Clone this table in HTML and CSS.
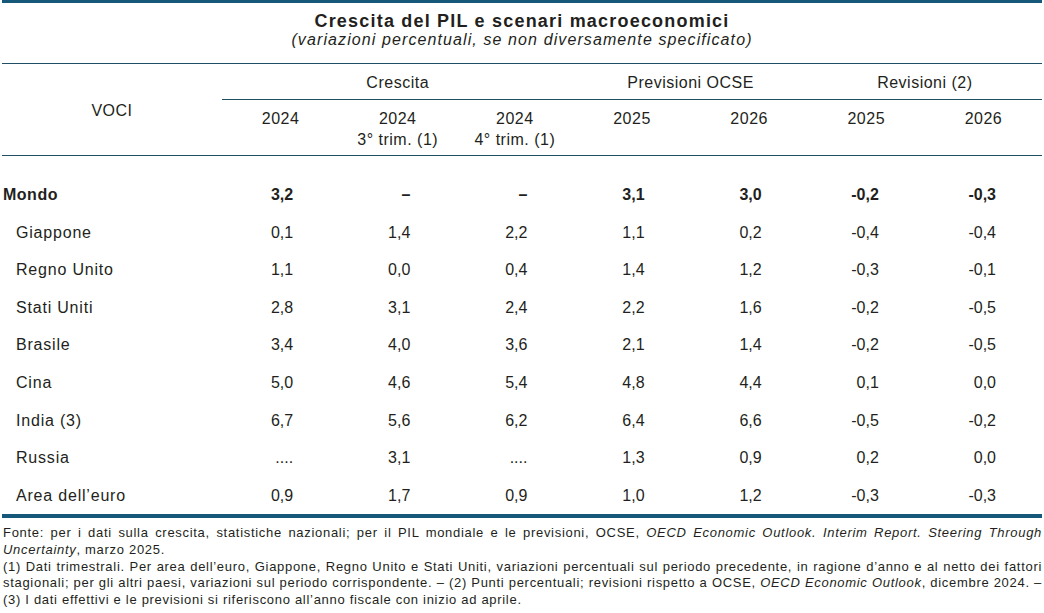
FILE: index.html
```html
<!DOCTYPE html>
<html lang="it">
<head>
<meta charset="utf-8">
<title>Crescita del PIL e scenari macroeconomici</title>
<link rel="stylesheet" href="styles.css">
</head>
<body>
<div class="page">
  <header class="head">
    <h1 class="title">Crescita del PIL e scenari macroeconomici</h1>
    <p class="subtitle">(variazioni percentuali, se non diversamente specificato)</p>
  </header>
  <table class="data">
    <colgroup>
      <col class="c-label">
      <col class="c-num"><col class="c-num"><col class="c-num"><col class="c-num"><col class="c-num"><col class="c-num"><col class="c-num">
    </colgroup>
    <thead>
      <tr>
        <th rowspan="2" class="voci">VOCI</th>
        <th colspan="3" class="grp">Crescita</th>
        <th colspan="2" class="grp">Previsioni OCSE</th>
        <th colspan="2" class="grp">Revisioni (2)</th>
      </tr>
      <tr>
        <th class="yr">2024</th>
        <th class="yr">2024<br>3° trim. (1)</th>
        <th class="yr">2024<br>4° trim. (1)</th>
        <th class="yr">2025</th>
        <th class="yr">2026</th>
        <th class="yr">2025</th>
        <th class="yr">2026</th>
      </tr>
    </thead>
    <tbody>
      <tr class="first total">
        <td class="lbl lvl0">Mondo</td><td>3,2</td><td>–</td><td>–</td><td>3,1</td><td>3,0</td><td>-0,2</td><td>-0,3</td>
      </tr>
      <tr>
        <td class="lbl lvl1">Giappone</td><td>0,1</td><td>1,4</td><td>2,2</td><td>1,1</td><td>0,2</td><td>-0,4</td><td>-0,4</td>
      </tr>
      <tr>
        <td class="lbl lvl1">Regno Unito</td><td>1,1</td><td>0,0</td><td>0,4</td><td>1,4</td><td>1,2</td><td>-0,3</td><td>-0,1</td>
      </tr>
      <tr>
        <td class="lbl lvl1">Stati Uniti</td><td>2,8</td><td>3,1</td><td>2,4</td><td>2,2</td><td>1,6</td><td>-0,2</td><td>-0,5</td>
      </tr>
      <tr>
        <td class="lbl lvl1">Brasile</td><td>3,4</td><td>4,0</td><td>3,6</td><td>2,1</td><td>1,4</td><td>-0,2</td><td>-0,5</td>
      </tr>
      <tr>
        <td class="lbl lvl1">Cina</td><td>5,0</td><td>4,6</td><td>5,4</td><td>4,8</td><td>4,4</td><td>0,1</td><td>0,0</td>
      </tr>
      <tr>
        <td class="lbl lvl1">India (3)</td><td>6,7</td><td>5,6</td><td>6,2</td><td>6,4</td><td>6,6</td><td>-0,5</td><td>-0,2</td>
      </tr>
      <tr>
        <td class="lbl lvl1">Russia</td><td>....</td><td>3,1</td><td>....</td><td>1,3</td><td>0,9</td><td>0,2</td><td>0,0</td>
      </tr>
      <tr class="last">
        <td class="lbl lvl1">Area dell’euro</td><td>0,9</td><td>1,7</td><td>0,9</td><td>1,0</td><td>1,2</td><td>-0,3</td><td>-0,3</td>
      </tr>
    </tbody>
  </table>
  <div class="notes">
    <p class="note"><span class="full">Fonte: per i dati sulla crescita, statistiche nazionali; per il PIL mondiale e le previsioni, OCSE, <i>OECD Economic Outlook. Interim Report. Steering Through</i></span><i>Uncertainty</i>, marzo 2025.</p>
    <p class="note"><span class="full">(1) Dati trimestrali. Per area dell’euro, Giappone, Regno Unito e Stati Uniti, variazioni percentuali sul periodo precedente, in ragione d’anno e al netto dei fattori</span><span class="full">stagionali; per gli altri paesi, variazioni sul periodo corrispondente. – (2) Punti percentuali; revisioni rispetto a OCSE, <i>OECD Economic Outlook</i>, dicembre 2024. –</span>(3) I dati effettivi e le previsioni si riferiscono all’anno fiscale con inizio ad aprile.</p>
  </div>
</div>
</body>
</html>
```

FILE: styles.css
```css
html, body {
  margin: 0;
  padding: 0;
  background: #ffffff;
}

body {
  font-family: "Liberation Sans", Arial, Helvetica, sans-serif;
  color: #231f20;
}

.page {
  width: 1040px;
  margin-left: 2px;
}

.head {
  border-top: 3px solid #16587a;
  border-bottom: 1px solid #1f4f65;
  padding: 9px 0 14px;
  text-align: center;
}

.title {
  margin: 0;
  font-size: 18px;
  line-height: 19px;
  font-weight: bold;
  letter-spacing: 1.2px;
}

.subtitle {
  margin: 0;
  font-size: 16px;
  line-height: 18px;
  font-style: italic;
  letter-spacing: 1.1px;
}

.data {
  width: 1040px;
  table-layout: fixed;
  border-collapse: separate;
  border-spacing: 0;
  font-size: 16px;
}

.c-label {
  width: 220px;
}

.data th {
  font-weight: normal;
  text-align: center;
  letter-spacing: 0.5px;
}

.voci {
  vertical-align: middle;
  padding-top: 3px;
  border-bottom: 1px solid #1f4f65;
}

.grp {
  line-height: 20px;
  padding: 9px 0 6px;
  border-bottom: 1px solid #1f4f65;
}

.yr {
  line-height: 21px;
  padding: 8px 0 5px;
  vertical-align: top;
  border-bottom: 1px solid #1f4f65;
}

.data td {
  line-height: 37.6px;
  padding: 0 46px 0 0;
  text-align: right;
  white-space: nowrap;
}

.data td.lbl {
  text-align: left;
  padding-right: 0;
  letter-spacing: 0.8px;
}

.data td.lvl0 {
  padding-left: 1px;
  letter-spacing: 0.5px;
}

.data td.lvl1 {
  padding-left: 14px;
}

.total td {
  font-weight: bold;
}

.first td {
  padding-top: 20px;
}

.last td {
  border-bottom: 4px solid #16587a;
}

.notes {
  margin-top: 7px;
  font-size: 13px;
  line-height: 16.7px;
  text-align: justify;
  letter-spacing: 0.7px;
}

.note {
  margin: 0;
  padding-left: 1px;
}

.full {
  display: block;
  text-align-last: justify;
}
```
